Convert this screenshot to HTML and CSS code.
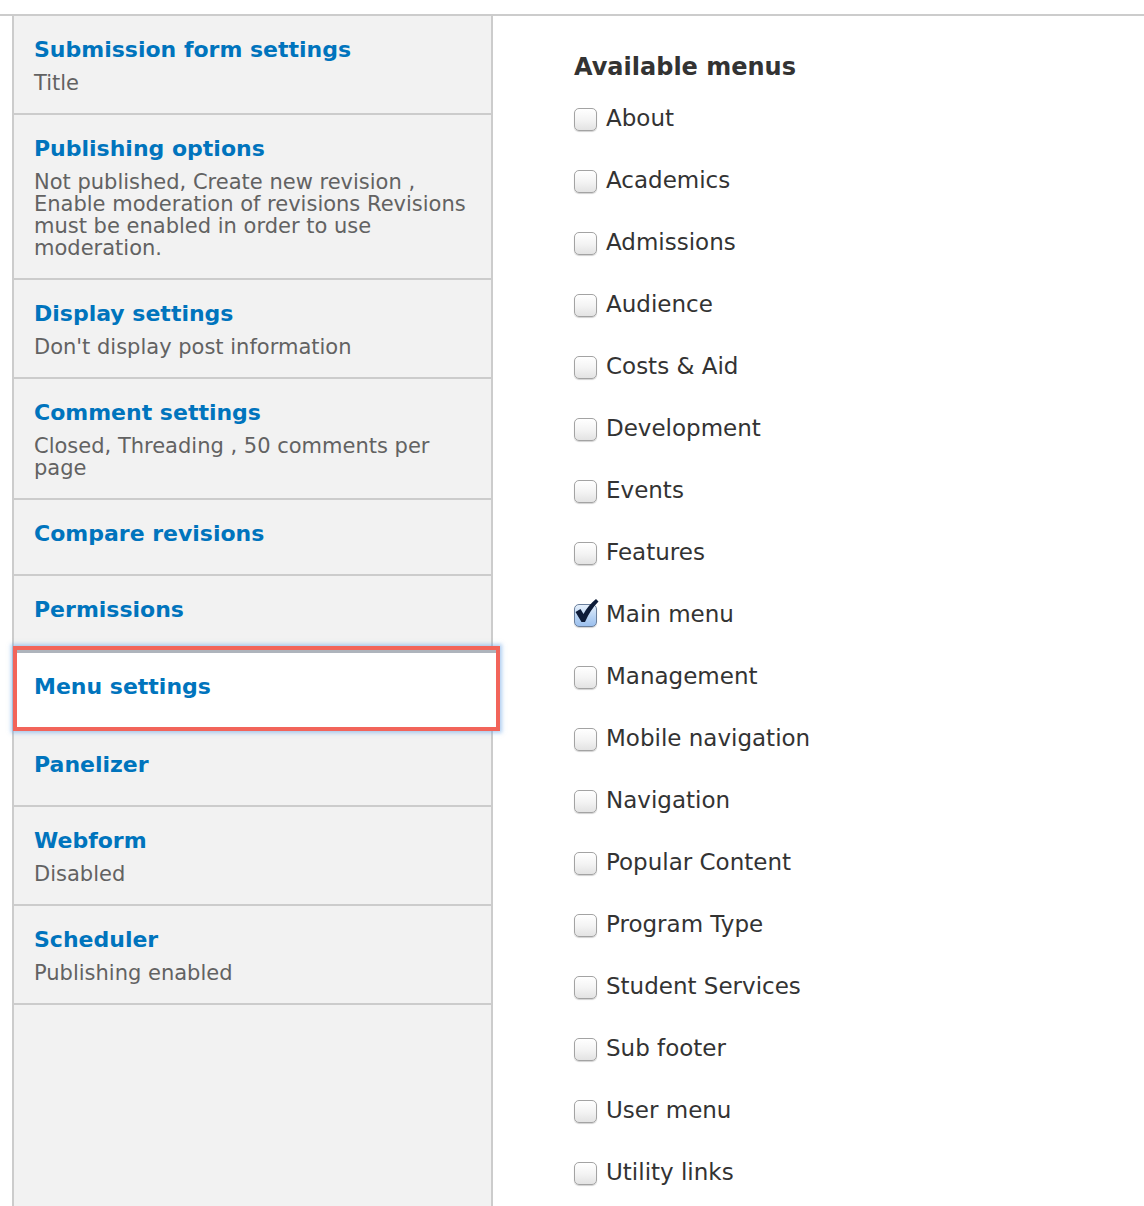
FILE: index.html
```html
<!DOCTYPE html>
<html lang="en">
<head>
<meta charset="utf-8">
<title>Menu settings</title>
<link rel="stylesheet" href="styles.css">
</head>
<body>
<div class="page">
  <ul class="tabs">
    <li class="tab"><a class="tab-title" href="#">Submission form settings</a><span class="tab-summary">Title</span></li>
    <li class="tab"><a class="tab-title" href="#">Publishing options</a><span class="tab-summary">Not published, Create new revision , Enable moderation of revisions Revisions must be enabled in order to use moderation.</span></li>
    <li class="tab"><a class="tab-title" href="#">Display settings</a><span class="tab-summary">Don't display post information</span></li>
    <li class="tab"><a class="tab-title" href="#">Comment settings</a><span class="tab-summary">Closed, Threading , 50 comments per page</span></li>
    <li class="tab tab-plain"><a class="tab-title" href="#">Compare revisions</a></li>
    <li class="tab tab-plain"><a class="tab-title" href="#">Permissions</a></li>
    <li class="tab tab-plain tab-selected"><a class="tab-title" href="#">Menu settings</a></li>
    <li class="tab tab-plain"><a class="tab-title" href="#">Panelizer</a></li>
    <li class="tab"><a class="tab-title" href="#">Webform</a><span class="tab-summary">Disabled</span></li>
    <li class="tab"><a class="tab-title" href="#">Scheduler</a><span class="tab-summary">Publishing enabled</span></li>
  </ul>
  <div class="pane">
    <h2 class="pane-title">Available menus</h2>
    <ul class="menus">
      <li class="menu"><span class="box"></span><span class="label">About</span></li>
      <li class="menu"><span class="box"></span><span class="label">Academics</span></li>
      <li class="menu"><span class="box"></span><span class="label">Admissions</span></li>
      <li class="menu"><span class="box"></span><span class="label">Audience</span></li>
      <li class="menu"><span class="box"></span><span class="label">Costs &amp; Aid</span></li>
      <li class="menu"><span class="box"></span><span class="label">Development</span></li>
      <li class="menu"><span class="box"></span><span class="label">Events</span></li>
      <li class="menu"><span class="box"></span><span class="label">Features</span></li>
      <li class="menu"><span class="box box-checked"><svg class="check" viewBox="0 0 26 26" width="26" height="26"><path d="M2.5 14 L7.5 11 L10.5 16 Q15 7.5 23 1 L25.5 3.5 Q17.5 11.5 12 24 L8.5 24 Z" fill="#0e1c38"/></svg></span><span class="label">Main menu</span></li>
      <li class="menu"><span class="box"></span><span class="label">Management</span></li>
      <li class="menu"><span class="box"></span><span class="label">Mobile navigation</span></li>
      <li class="menu"><span class="box"></span><span class="label">Navigation</span></li>
      <li class="menu"><span class="box"></span><span class="label">Popular Content</span></li>
      <li class="menu"><span class="box"></span><span class="label">Program Type</span></li>
      <li class="menu"><span class="box"></span><span class="label">Student Services</span></li>
      <li class="menu"><span class="box"></span><span class="label">Sub footer</span></li>
      <li class="menu"><span class="box"></span><span class="label">User menu</span></li>
      <li class="menu"><span class="box"></span><span class="label">Utility links</span></li>
    </ul>
  </div>
</div>
</body>
</html>
```
FILE: styles.css
```css
html, body {
  margin: 0;
  padding: 0;
  background: #fff;
}
body {
  font-family: "DejaVu Sans", Verdana, sans-serif;
  overflow: hidden;
}
.page {
  margin-top: 14px;
  border-top: 2px solid #cccccc;
  display: flex;
  height: 1190px;
}
.tabs {
  list-style: none;
  margin: 0 0 0 12px;
  padding: 0;
  width: 481px;
  box-sizing: border-box;
  flex: none;
  background: #f2f2f2;
  border-left: 2px solid #cccccc;
  border-right: 2px solid #cccccc;
  display: flex;
  flex-direction: column;
}
.tab {
  display: flex;
  flex-direction: column;
  padding: 19px 20px 19px 20px;
  border-bottom: 2px solid #cccccc;
}
.tab-plain {
  padding-bottom: 25px;
}
.tab-title {
  font-size: 22px;
  font-weight: bold;
  line-height: 30px;
  color: #0074bd;
  text-decoration: none;
}
.tab-summary {
  margin-top: 7px;
  font-size: 21px;
  line-height: 22px;
  color: #626262;
}
.tab-selected {
  position: relative;
  z-index: 1;
  background: #ffffff;
  margin: -6px -9px 0 -1px;
  padding: 22px 20px 25px 17px;
  border: 4px solid #f2645a;
  box-shadow: 0 0 4px 2px rgba(110, 165, 230, 0.55), inset 0 3px 0 #aeb4bc;
}
.pane {
  flex: 1;
  padding: 35px 0 0 81px;
}
.pane-title {
  margin: 0 0 4px 0;
  font-size: 24px;
  line-height: 32px;
  font-weight: bold;
  color: #333333;
}
.menus {
  list-style: none;
  margin: 0;
  padding: 0;
}
.menu {
  height: 62px;
  display: flex;
  align-items: center;
}
.box {
  position: relative;
  flex: none;
  width: 21px;
  height: 21px;
  margin-top: 3px;
  border: 1px solid #a3a3a3;
  border-radius: 5px;
  background: linear-gradient(#ffffff 0%, #f4f4f4 50%, #e3e3e3 100%);
  box-shadow: 0 1px 1px rgba(0, 0, 0, 0.18);
}
.box-checked {
  border-color: #6a7f9c;
  background: linear-gradient(#e6f0fc 0%, #b8d3f3 55%, #9cc0ee 100%);
}
.check {
  position: absolute;
  left: -2px;
  top: -7px;
}
.label {
  margin-left: 9px;
  font-size: 23px;
  line-height: 30px;
  color: #333333;
}
```
